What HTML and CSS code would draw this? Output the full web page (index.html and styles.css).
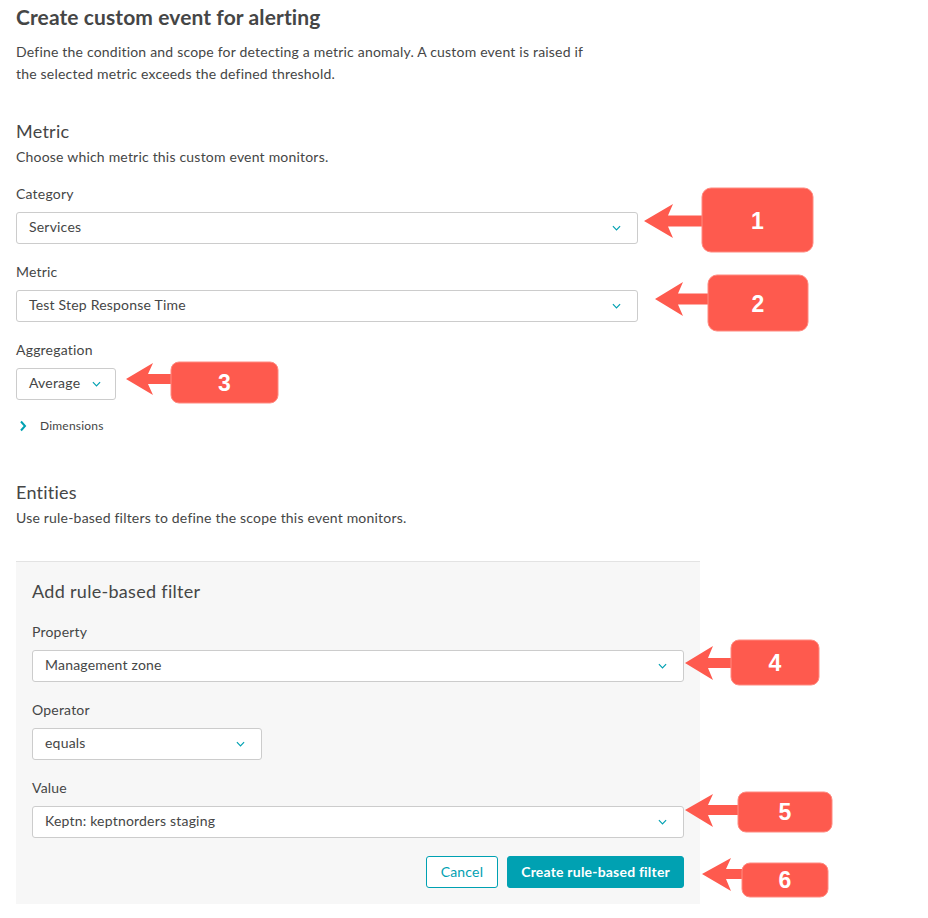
FILE: index.html
```html
<!DOCTYPE html>
<html lang="en">
<head>
<meta charset="utf-8">
<title>Create custom event for alerting</title>
<link rel="stylesheet" href="styles.css">
</head>
<body>
<main class="page">
  <h1 class="title">Create custom event for alerting</h1>
  <p class="intro">Define the condition and scope for detecting a metric anomaly. A custom event is raised if<br>the selected metric exceeds the defined threshold.</p>

  <section class="section">
    <h2 class="section-title">Metric</h2>
    <p class="section-desc">Choose which metric this custom event monitors.</p>
    <div class="fields">
      <div class="field">
        <span class="label">Category</span>
        <div class="select select-wide"><span class="select-text">Services</span><svg class="chev" viewBox="0 0 10 6"><path d="M1 1L5 5L9 1"/></svg></div>
      </div>
      <div class="field">
        <span class="label">Metric</span>
        <div class="select select-wide"><span class="select-text">Test Step Response Time</span><svg class="chev" viewBox="0 0 10 6"><path d="M1 1L5 5L9 1"/></svg></div>
      </div>
      <div class="field">
        <span class="label">Aggregation</span>
        <div class="select select-agg"><span class="select-text">Average</span><svg class="chev" viewBox="0 0 10 6"><path d="M1 1L5 5L9 1"/></svg></div>
      </div>
    </div>
    <div class="disclosure">
      <svg class="disc-chev" viewBox="0 0 8 12"><path d="M2 1.5L6 6L2 10.5"/></svg>
      <span>Dimensions</span>
    </div>
  </section>

  <section class="section section-entities">
    <h2 class="section-title">Entities</h2>
    <p class="section-desc">Use rule-based filters to define the scope this event monitors.</p>
    <div class="panel">
      <h3 class="panel-title">Add rule-based filter</h3>
      <div class="fields">
        <div class="field">
          <span class="label">Property</span>
          <div class="select select-full"><span class="select-text">Management zone</span><svg class="chev" viewBox="0 0 10 6"><path d="M1 1L5 5L9 1"/></svg></div>
        </div>
        <div class="field">
          <span class="label">Operator</span>
          <div class="select select-op"><span class="select-text">equals</span><svg class="chev" viewBox="0 0 10 6"><path d="M1 1L5 5L9 1"/></svg></div>
        </div>
        <div class="field">
          <span class="label">Value</span>
          <div class="select select-full"><span class="select-text">Keptn: keptnorders staging</span><svg class="chev" viewBox="0 0 10 6"><path d="M1 1L5 5L9 1"/></svg></div>
        </div>
      </div>
      <div class="actions">
        <button class="btn btn-secondary" type="button">Cancel</button>
        <button class="btn btn-primary" type="button">Create rule-based filter</button>
      </div>
    </div>
  </section>
</main>

<svg class="annotations" viewBox="0 0 928 918" width="928" height="918">
  <g class="callout">
    <path d="M644 221L673 204L668 215.5L704 215.5L704 226.5L668 226.5L673 238Z"/>
    <rect x="702" y="188" width="111" height="64" rx="9"/>
    <text x="757.5" y="221">1</text>
  </g>
  <g class="callout">
    <path d="M655 299L683 282L678 293.5L710 293.5L710 304.5L678 304.5L683 316Z"/>
    <rect x="708" y="275" width="100" height="56" rx="9"/>
    <text x="758" y="304">2</text>
  </g>
  <g class="callout">
    <path d="M126 379L153 363L148 374L173 374L173 384L148 384L153 395Z"/>
    <rect x="171" y="362" width="107" height="41" rx="8"/>
    <text x="224.5" y="383">3</text>
  </g>
  <g class="callout">
    <path d="M685 663L713 646L708 658L733 658L733 668L708 668L713 680Z"/>
    <rect x="731" y="640" width="88" height="45" rx="8"/>
    <text x="775" y="663">4</text>
  </g>
  <g class="callout">
    <path d="M685 810L713 794L708 805L740 805L740 815L708 815L713 827Z"/>
    <rect x="738" y="792" width="94" height="40" rx="8"/>
    <text x="785" y="812">5</text>
  </g>
  <g class="callout">
    <path d="M702 874L731 858L726 869L744 869L744 879L726 879L731 891Z"/>
    <rect x="742" y="863" width="86" height="34" rx="8"/>
    <text x="785" y="880">6</text>
  </g>
</svg>
</body>
</html>
```

FILE: styles.css
```css
* {
  box-sizing: border-box;
}

html,
body {
  margin: 0;
  padding: 0;
}

body {
  position: relative;
  width: 928px;
  height: 918px;
  overflow: hidden;
  background: #ffffff;
  color: #454646;
  font-family: Lato, "Open Sans", "DejaVu Sans", sans-serif;
  font-size: 14px;
  letter-spacing: 0.2px;
}

.page {
  padding: 3px 16px 0;
}

.title {
  margin: 0;
  font-size: 21px;
  font-weight: 700;
  line-height: 28px;
  letter-spacing: 0.1px;
}

.intro {
  margin: 10px 0 0;
  font-size: 14px;
  line-height: 22px;
}

.section-title {
  margin: 32px 0 0;
  font-size: 18px;
  font-weight: 400;
  line-height: 28px;
  letter-spacing: 0.25px;
}

.section-desc {
  margin: 2px 0 0;
  font-size: 14px;
  line-height: 20px;
}

.fields {
  display: flex;
  flex-direction: column;
  gap: 18px;
  margin-top: 17px;
}

.field {
  display: flex;
  flex-direction: column;
}

.label {
  display: block;
  margin-bottom: 8px;
  font-size: 14px;
  line-height: 20px;
}

.select {
  display: flex;
  align-items: center;
  justify-content: space-between;
  height: 32px;
  padding: 0 16px 0 12px;
  background: #ffffff;
  border: 1px solid #cccccc;
  border-radius: 3px;
  font-size: 14px;
  color: #454646;
}

.select-text {
  margin-bottom: 2px;
  line-height: 20px;
}

.select-wide {
  width: 622px;
}

.select-agg {
  width: 100px;
  padding-right: 14px;
}

.select-full {
  width: 652px;
}

.select-op {
  width: 230px;
  padding-right: 16px;
}

.chev {
  width: 9px;
  height: 6px;
  fill: none;
  stroke: #00a1b2;
  stroke-width: 1.3;
}

.disclosure {
  display: flex;
  align-items: center;
  gap: 13px;
  margin-top: 16px;
  padding-left: 3px;
  font-size: 12px;
  line-height: 20px;
}

.disc-chev {
  width: 8px;
  height: 12px;
  fill: none;
  stroke: #00a1b2;
  stroke-width: 2;
}

.section-entities .section-title {
  margin-top: 42px;
}

.panel {
  width: 684px;
  margin-top: 33px;
  padding: 15px 16px 16px;
  background: #f7f7f7;
  border-top: 1px solid #e3e3e3;
}

.panel-title {
  margin: 0;
  font-size: 18px;
  font-weight: 400;
  line-height: 28px;
  letter-spacing: 0.3px;
}

.actions {
  display: flex;
  justify-content: flex-end;
  gap: 9px;
  margin-top: 18px;
}

.btn {
  height: 32px;
  border-radius: 3px;
  font-family: inherit;
  font-size: 14px;
  line-height: 20px;
  letter-spacing: 0.2px;
  cursor: pointer;
}

.btn-secondary {
  padding: 0 14px;
  background: #ffffff;
  border: 1px solid #00a1b2;
  color: #00a1b2;
}

.btn-primary {
  padding: 0 13px;
  background: #00a1b2;
  border: 1px solid #00a1b2;
  color: #ffffff;
  font-weight: 700;
}

.annotations {
  position: absolute;
  top: 0;
  left: 0;
  pointer-events: none;
}

.callout path,
.callout rect {
  fill: #fe5a4e;
}

.callout rect {
  stroke: #ff8a80;
  stroke-width: 1;
}

.callout text {
  fill: #ffffff;
  font-family: "Liberation Sans", Arial, sans-serif;
  font-size: 23px;
  font-weight: 700;
  letter-spacing: 0;
  text-anchor: middle;
  dominant-baseline: central;
}
```
